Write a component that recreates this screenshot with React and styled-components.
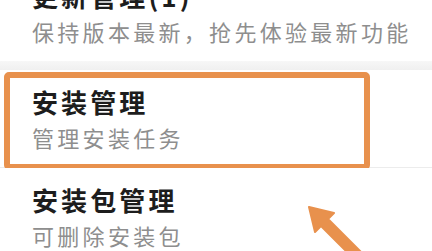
import React from "react";
import styled, { createGlobalStyle } from "styled-components";

const GlobalStyle = createGlobalStyle`
  html, body {
    margin: 0;
    padding: 0;
    background: #ffffff;
  }
  body {
    font-family: "Noto Sans CJK SC", "Noto Sans", sans-serif;
  }
`;

const accent = "#e8914d";

const Page = styled.div`
  position: relative;
  width: 432px;
  height: 251px;
  overflow: hidden;
  background: #ffffff;
`;

const List = styled.ul`
  list-style: none;
  margin: -36px 0 0;
  padding: 0;
  display: flex;
  flex-direction: column;
`;

const Item = styled.li`
  position: relative;
  display: flex;
  flex-direction: column;
  gap: 6px;
  padding: 17px 0 16px 32px;
  background: #ffffff;
  border-bottom: ${(p) => (p.$divider ? "1px solid #ececec" : "none")};
`;

const GroupGap = styled.div`
  height: 9px;
  background: linear-gradient(#f7f7f7, #f0f0f0);
`;

const Title = styled.div`
  font-size: 26px;
  line-height: 30px;
  font-weight: 700;
  letter-spacing: 3.1px;
  color: #1d1d1d;
  white-space: nowrap;
`;

const Desc = styled.div`
  font-size: 22px;
  line-height: 28px;
  letter-spacing: 3.3px;
  color: #8e8e8e;
  white-space: nowrap;
`;

const Highlight = styled.div`
  position: absolute;
  top: 2px;
  left: 4px;
  width: 366px;
  height: 98px;
  box-sizing: border-box;
  border: 6px solid ${accent};
  border-radius: 5px;
  pointer-events: none;
`;

const Arrow = styled.svg`
  position: absolute;
  left: 0;
  top: 0;
  width: 432px;
  height: 251px;
  pointer-events: none;
`;

const items = [
  { title: "更新管理(1)", desc: "保持版本最新，抢先体验最新功能" },
  { title: "安装管理", desc: "管理安装任务", marked: true },
  { title: "安装包管理", desc: "可删除安装包" },
];

export default function App() {
  return (
    <Page>
      <GlobalStyle />
      <List>
        <Item>
          <Title>{items[0].title}</Title>
          <Desc>{items[0].desc}</Desc>
        </Item>
        <GroupGap />
        {items.slice(1).map((item, index) => (
          <Item key={item.title} $divider={index === 0}>
            <Title>{item.title}</Title>
            <Desc>{item.desc}</Desc>
            {item.marked && <Highlight />}
          </Item>
        ))}
      </List>
      <Arrow viewBox="0 0 432 251">
        <polygon
          points="309,207 334,213 328,219 369,260 362,267 321,226 315,232"
          fill={accent}
          stroke={accent}
          strokeWidth="2"
          strokeLinejoin="round"
        />
      </Arrow>
    </Page>
  );
}
